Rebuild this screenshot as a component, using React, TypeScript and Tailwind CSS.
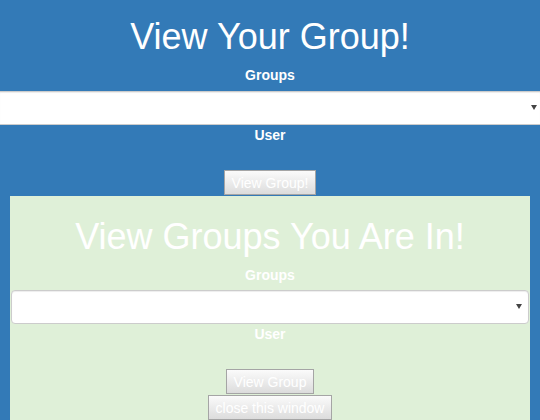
import React from "react";

function FakeSelect({ rounded = false }: { rounded?: boolean }) {
  return (
    <div
      className={
        rounded
          ? "relative h-[34px] w-full rounded-[4px] border border-[#cccccc] bg-white shadow-[inset_0_1px_1px_rgba(0,0,0,0.075)]"
          : "relative h-[34px] w-full border-y border-[#cccccc] bg-white shadow-[inset_0_1px_1px_rgba(0,0,0,0.075)]"
      }
    >
      <svg
        className={
          rounded
            ? "absolute right-[6px] top-[13px] h-[5px] w-[6px]"
            : "absolute right-[3px] top-[13px] h-[5px] w-[6px]"
        }
        viewBox="0 0 6 5"
      >
        <path d="M0 0 H6 L3 5 Z" fill="#444444" />
      </svg>
    </div>
  );
}

function GrayButton({ children }: { children: React.ReactNode }) {
  return (
    <button className="flex h-[25px] items-center justify-center border border-[#a5a5a5] bg-gradient-to-b from-[#fbfbfb] to-[#dcdcdc] px-[7px] text-[14px] leading-[20px] text-white">
      {children}
    </button>
  );
}

export default function App() {
  return (
    <div className="min-h-screen bg-[#337ab7] font-['Liberation_Sans',Arial,sans-serif] text-white">
      {/* Header: view your group */}
      <div className="pt-[17px] text-center">
        <h1 className="text-[36px] leading-[40px]">View Your Group!</h1>
        <label className="mb-[6px] mt-[8px] block text-[14px] font-bold leading-[20px]">
          Groups
        </label>
        <FakeSelect />
        <label className="block text-[14px] font-bold leading-[20px]">User</label>
        <div className="mb-[1px] mt-[25px] flex justify-center">
          <GrayButton>View Group!</GrayButton>
        </div>
      </div>

      {/* Green panel: groups you are in */}
      <div className="mx-[10px] bg-[#dff0d8] px-[1px] pt-[21px] text-center">
        <h1 className="text-[36px] leading-[40px]">View Groups You Are In!</h1>
        <label className="mb-[5px] mt-[8px] block text-[14px] font-bold leading-[20px]">
          Groups
        </label>
        <FakeSelect rounded />
        <label className="block text-[14px] font-bold leading-[20px]">User</label>
        <div className="mt-[25px] flex flex-col items-center gap-[1px] pb-[10px]">
          <GrayButton>View Group</GrayButton>
          <GrayButton>close this window</GrayButton>
        </div>
      </div>
    </div>
  );
}
